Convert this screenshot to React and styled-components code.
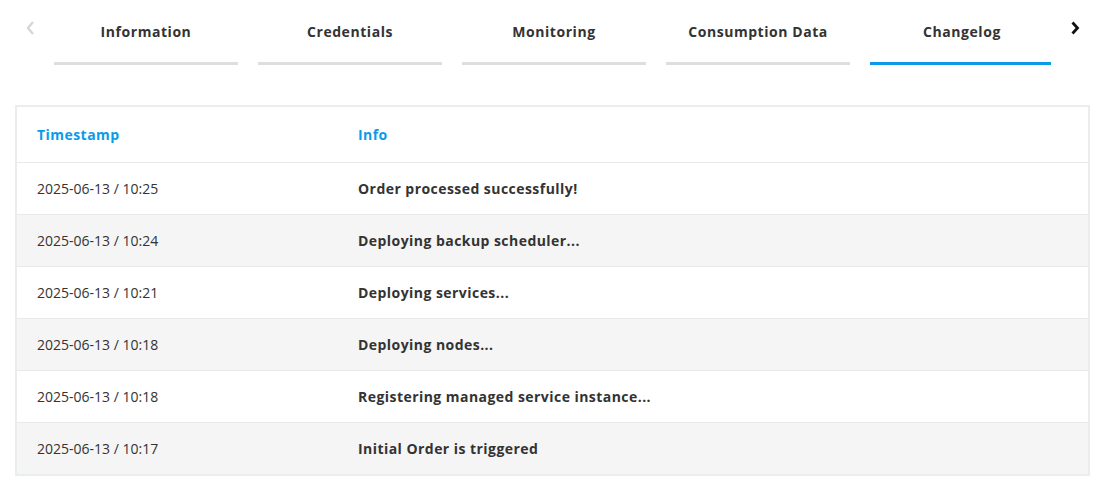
import React from "react";
import styled, { createGlobalStyle } from "styled-components";

const Global = createGlobalStyle`
  html, body { margin: 0; padding: 0; background: #fff; }
  body { font-family: "Open Sans", "Noto Sans", sans-serif; color: #333; }
`;

const Page = styled.div`
  width: 1107px;
  padding-bottom: 25px;
`;

const TabBar = styled.div`
  display: flex;
  align-items: flex-start;
  padding: 0 8px 0 6px;
`;

const Arrow = styled.button`
  flex: 0 0 48px;
  height: 65px;
  border: 0;
  background: none;
  padding: 0 0 10px;
  display: flex;
  align-items: center;
  justify-content: center;
  color: ${(p) => (p.$disabled ? "#d6d6d6" : "#111")};
  cursor: pointer;
`;

const TabViewport = styled.div`
  flex: 1;
  overflow: hidden;
`;

const TabTrack = styled.div`
  display: flex;
  gap: 20px;
`;

const Tab = styled.div`
  flex: 0 0 184px;
  height: 65px;
  box-sizing: border-box;
  padding-top: 22px;
  text-align: center;
  font-size: 14px;
  line-height: 20px;
  font-weight: 700;
  letter-spacing: 0.55px;
  color: #333;
  border-bottom: 3px solid ${(p) => (p.$active ? "#0a9be8" : "#dedede")};
`;

const Table = styled.div`
  margin: 40px 17px 0 15px;
  border: 2px solid #e9eded;
`;

const Row = styled.div`
  display: grid;
  grid-template-columns: 321px 1fr;
  align-items: center;
  height: ${(p) => (p.$head ? "55px" : "51px")};
  background: ${(p) => (p.$alt ? "#f5f5f5" : "#fff")};
  border-bottom: ${(p) => (p.$last ? "0" : "1px solid #e9e9e9")};
`;

const Cell = styled.div`
  padding-left: 20px;
  font-size: 14px;
  line-height: 20px;
  font-weight: ${(p) => (p.$bold ? 700 : 400)};
  letter-spacing: ${(p) => (p.$bold ? "0.45px" : "0")};
  color: ${(p) => (p.$head ? "#0a9be8" : "#333")};
  white-space: nowrap;
`;

const ChevronLeft = () => (
  <svg width="10" height="16" viewBox="0 0 10 16">
    <path d="M8 2 L3 8 L8 14" fill="none" stroke="currentColor" strokeWidth="2.4" />
  </svg>
);

const ChevronRight = () => (
  <svg width="10" height="16" viewBox="0 0 10 16">
    <path d="M2.5 2.5 L7.5 8 L2.5 13.5" fill="none" stroke="currentColor" strokeWidth="2.8" />
  </svg>
);

const tabs = ["Information", "Credentials", "Monitoring", "Consumption Data", "Changelog"];

const rows = [
  ["2025-06-13 / 10:25", "Order processed successfully!"],
  ["2025-06-13 / 10:24", "Deploying backup scheduler..."],
  ["2025-06-13 / 10:21", "Deploying services..."],
  ["2025-06-13 / 10:18", "Deploying nodes..."],
  ["2025-06-13 / 10:18", "Registering managed service instance..."],
  ["2025-06-13 / 10:17", "Initial Order is triggered"],
];

export default function App() {
  return (
    <Page>
      <Global />
      <TabBar>
        <Arrow $disabled aria-label="previous">
          <ChevronLeft />
        </Arrow>
        <TabViewport>
          <TabTrack>
            {tabs.map((t) => (
              <Tab key={t} $active={t === "Changelog"}>
                {t}
              </Tab>
            ))}
          </TabTrack>
        </TabViewport>
        <Arrow aria-label="next">
          <ChevronRight />
        </Arrow>
      </TabBar>
      <Table>
        <Row $head>
          <Cell $head $bold>Timestamp</Cell>
          <Cell $head $bold>Info</Cell>
        </Row>
        {rows.map(([ts, info], i) => (
          <Row key={i} $alt={i % 2 === 1} $last={i === rows.length - 1}>
            <Cell>{ts}</Cell>
            <Cell $bold>{info}</Cell>
          </Row>
        ))}
      </Table>
    </Page>
  );
}
